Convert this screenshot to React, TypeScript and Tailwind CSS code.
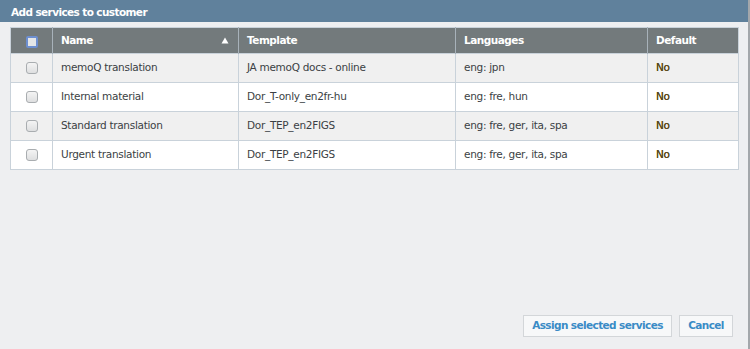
import React from "react";

const rows = [
  { name: "memoQ translation", template: "JA memoQ docs - online", langs: "eng: jpn", def: "No" },
  { name: "Internal material", template: "Dor_T-only_en2fr-hu", langs: "eng: fre, hun", def: "No" },
  { name: "Standard translation", template: "Dor_TEP_en2FIGS", langs: "eng: fre, ger, ita, spa", def: "No" },
  { name: "Urgent translation", template: "Dor_TEP_en2FIGS", langs: "eng: fre, ger, ita, spa", def: "No" },
];

function Box({ head }: { head?: boolean }) {
  return head ? (
    <span className="inline-block w-[12px] h-[12px] rounded-[2px] border-2 border-[#6d8fd0] bg-[#e4e6e8]" />
  ) : (
    <span className="inline-block w-[12px] h-[12px] rounded-[3px] border border-[#a9adb0] bg-gradient-to-b from-[#f4f4f4] to-[#dedfe0]" />
  );
}

export default function App() {
  return (
    <div className="w-[750px] h-[349px] flex bg-white font-['DejaVu_Sans',Verdana,sans-serif] text-[10.5px] tracking-[-0.3px]">
      <div className="w-[748px] h-full flex flex-col bg-[#eeeff1]">
        {/* title bar */}
        <div className="h-[22px] flex items-center px-[11px] pt-[3px] bg-[#60819c] text-white font-bold text-[10.5px] tracking-[-0.6px]">
          Add services to customer
        </div>

        <div className="px-[10px] pt-[5px] pr-[9px]">
          <table className="w-full border-collapse border border-[#c9d2da] table-fixed">
            <colgroup>
              <col className="w-[42px]" />
              <col className="w-[186px]" />
              <col className="w-[217px]" />
              <col className="w-[192px]" />
              <col />
            </colgroup>
            <thead>
              <tr className="h-[26px] bg-[#737a7c] text-white font-bold text-left tracking-[-0.5px]">
                <th className="border-r border-[#a8b2ba] text-center align-middle">
                  <div className="flex justify-center pt-[2px]"><Box head /></div>
                </th>
                <th className="border-r border-[#a8b2ba] px-[8px]">
                  <div className="flex items-center justify-between">
                    <span>Name</span>
                    <svg width="8" height="7" viewBox="0 0 8 7" className="mr-[1px]">
                      <path d="M4 0.5 L7.5 6.5 L0.5 6.5 Z" fill="#ffffff" />
                    </svg>
                  </div>
                </th>
                <th className="border-r border-[#a8b2ba] px-[8px]">Template</th>
                <th className="border-r border-[#a8b2ba] px-[8px]">Languages</th>
                <th className="px-[8px]">Default</th>
              </tr>
            </thead>
            <tbody className="text-[#3b3f44]">
              {rows.map((r, i) => (
                <tr key={i} className={`h-[29px] border-t border-[#c9d2da] ${i % 2 === 0 ? "bg-[#f0f0f0]" : "bg-white"}`}>
                  <td className="border-r border-[#c9d2da]">
                    <div className="flex justify-center"><Box /></div>
                  </td>
                  <td className="border-r border-[#c9d2da] px-[8px]">{r.name}</td>
                  <td className="border-r border-[#c9d2da] px-[8px]">{r.template}</td>
                  <td className="border-r border-[#c9d2da] px-[8px]">{r.langs}</td>
                  <td className="px-[8px] text-[#5a4818] [text-shadow:0_0_0.4px_#5a4818]">{r.def}</td>
                </tr>
              ))}
            </tbody>
          </table>
        </div>

        <div className="mt-auto flex justify-end gap-[7px] pr-[15px] pb-[12px]">
          <button className="h-[22px] w-[149px] whitespace-nowrap border border-[#d3d6d9] bg-[#f7f8f9] text-[#3a8bc6] font-bold text-[10.5px] tracking-[-0.6px]">
            Assign selected services
          </button>
          <button className="h-[22px] w-[54px] whitespace-nowrap border border-[#d3d6d9] bg-[#f7f8f9] text-[#3a8bc6] font-bold text-[10.5px] tracking-[-0.6px]">
            Cancel
          </button>
        </div>
      </div>
      <div className="w-[2px] h-full bg-[#a3a7ab]" />
    </div>
  );
}
